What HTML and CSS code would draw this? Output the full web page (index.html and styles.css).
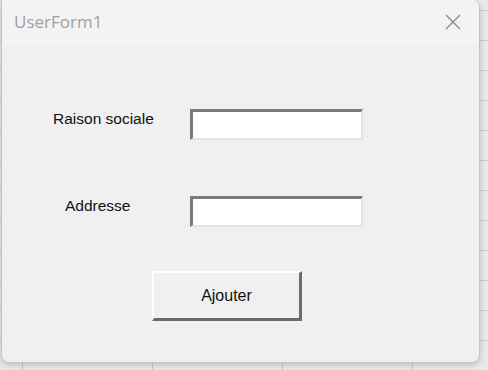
FILE: index.html
```html
<!DOCTYPE html>
<html lang="fr">
<head>
    <meta charset="UTF-8">
    <title>UserForm1</title>
    <link rel="stylesheet" href="styles.css">
</head>
<body>

<div class="form-window">
    <div class="title-bar">
        <span class="title">UserForm1</span>
        <svg class="close" width="16" height="16" viewBox="0 0 16 16">
            <path d="M1 1 L15 15 M15 1 L1 15" stroke="#8a8a8a" stroke-width="1.4" fill="none"/>
        </svg>
    </div>
    <div class="form-body">
        <div class="field-row first">
            <label class="field-label" for="raison">Raison sociale</label>
            <input class="field-input" type="text" id="raison">
        </div>
        <div class="field-row second">
            <label class="field-label" for="adresse">Addresse</label>
            <input class="field-input" type="text" id="adresse">
        </div>
        <div class="button-row">
            <button class="add-btn" id="ajouter">Ajouter</button>
        </div>
    </div>
</div>

</body>
</html>
```

FILE: styles.css
```css
body {
    margin: 0;
    width: 488px;
    height: 370px;
    overflow: hidden;
    background-color: #e9e9e9;
    background-image:
        linear-gradient(to bottom, #c9c9c9 1px, transparent 1px),
        linear-gradient(to right, #c9c9c9 1px, transparent 1px);
    background-size: 130px 30px;
    background-position: 22px 10px;
}
.form-window {
    margin-left: 1px;
    width: 477px;
    height: 362px;
    background-color: #f0f0f0;
    border: 1px solid #c4c4c4;
    border-top: none;
    border-radius: 0 8px 8px 8px;
    box-shadow: 0 2px 6px rgba(0, 0, 0, 0.18);
    overflow: hidden;
    font-family: "Liberation Sans", Arial, sans-serif;
}
.title-bar {
    height: 45px;
    background-color: #f3f3f3;
    display: flex;
    align-items: center;
    justify-content: space-between;
    padding: 0 18px 0 12px;
}
.title {
    font-family: "Open Sans", "Noto Sans", sans-serif;
    font-size: 17px;
    color: #a0a0a0;
    margin-top: -2px;
}
.close {
    margin-top: -2px;
}
.form-body {
    padding-top: 64px;
}
.field-row {
    display: flex;
    align-items: flex-start;
}
.field-row.first {
    padding-left: 51px;
}
.field-row.first .field-label {
    width: 137px;
}
.field-row.second {
    margin-top: 56px;
    padding-left: 63px;
}
.field-row.second .field-label {
    width: 125px;
}
.field-label {
    font-size: 15.5px;
    color: #111;
    margin-top: 1px;
}
.field-input {
    width: 173px;
    height: 31px;
    box-sizing: border-box;
    background: #fff;
    border-style: solid;
    border-width: 3px 2px 2px 3px;
    border-color: #7a7a7a #e4e4e4 #e4e4e4 #7a7a7a;
    padding: 0 4px;
    outline: none;
}
.button-row {
    margin-top: 44px;
    padding-left: 150px;
}
.add-btn {
    width: 150px;
    height: 50px;
    box-sizing: border-box;
    background-color: #f0f0f0;
    border-style: solid;
    border-width: 2px 3px 3px 2px;
    border-color: #ffffff #6b6b6b #6b6b6b #ffffff;
    font-family: "Liberation Sans", Arial, sans-serif;
    font-size: 16px;
    color: #111;
    padding: 0;
}
```
